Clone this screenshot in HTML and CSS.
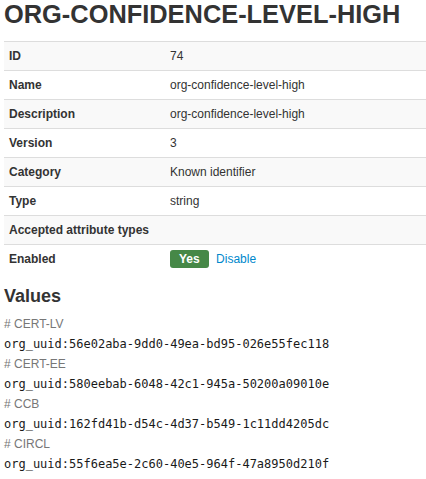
FILE: index.html
```html
<!DOCTYPE html>
<html>
<head>
<meta charset="utf-8">
<link rel="stylesheet" href="styles.css">
</head>
<body>
<div class="page">
  <h2 class="title">ORG-CONFIDENCE-LEVEL-HIGH</h2>
  <table class="meta">
    <tbody>
      <tr><th>ID</th><td>74</td></tr>
      <tr><th>Name</th><td>org-confidence-level-high</td></tr>
      <tr><th>Description</th><td>org-confidence-level-high</td></tr>
      <tr><th>Version</th><td>3</td></tr>
      <tr><th>Category</th><td>Known identifier</td></tr>
      <tr><th>Type</th><td>string</td></tr>
      <tr><th>Accepted attribute types</th><td></td></tr>
      <tr><th>Enabled</th><td><span class="badge">Yes</span> <a class="link" href="#">Disable</a></td></tr>
    </tbody>
  </table>
  <h4 class="subtitle">Values</h4>
  <div class="values">
    <div class="comment"># CERT-LV</div>
    <div class="mono">org_uuid:56e02aba-9dd0-49ea-bd95-026e55fec118</div>
    <div class="comment"># CERT-EE</div>
    <div class="mono">org_uuid:580eebab-6048-42c1-945a-50200a09010e</div>
    <div class="comment"># CCB</div>
    <div class="mono">org_uuid:162fd41b-d54c-4d37-b549-1c11dd4205dc</div>
    <div class="comment"># CIRCL</div>
    <div class="mono">org_uuid:55f6ea5e-2c60-40e5-964f-47a8950d210f</div>
  </div>
</div>
</body>
</html>
```

FILE: styles.css
```css
html, body {
  margin: 0;
  padding: 0;
  background: #fff;
}
body {
  font-family: "Liberation Sans", Arial, sans-serif;
  font-size: 12px;
  color: #333;
}
.page {
  padding: 0 0 0 4px;
}
.title {
  margin: 0 0 13px 0;
  font-size: 25.4px;
  line-height: 28px;
  font-weight: bold;
  color: #333;
}
.meta {
  width: 100%;
  border-collapse: collapse;
  border-spacing: 0;
}
.meta th, .meta td {
  border-top: 1px solid #ddd;
  padding: 4px 5px;
  line-height: 20px;
  text-align: left;
  vertical-align: top;
}
.meta th {
  width: 151px;
  font-weight: bold;
}
.meta tr:nth-child(odd) th, .meta tr:nth-child(odd) td {
  background: #f9f9f9;
}
.badge {
  display: inline-block;
  background: #468847;
  color: #fff;
  font-weight: bold;
  font-size: 12px;
  line-height: 14px;
  padding: 2px 9px;
  border-radius: 3px;
  vertical-align: middle;
  margin-top: -2px;
}
.link {
  color: #0088cc;
  text-decoration: none;
  margin-left: 4px;
}
.subtitle {
  margin: 13px 0 8px 0;
  font-size: 18px;
  line-height: 20px;
  font-weight: bold;
  color: #333;
}
.values {
  display: flex;
  flex-direction: column;
}
.comment {
  color: #777;
  line-height: 20px;
  font-size: 12px;
}
.mono {
  font-family: "DejaVu Sans Mono", monospace;
  font-size: 12px;
  line-height: 20px;
  color: #1a1a1a;
}
```
